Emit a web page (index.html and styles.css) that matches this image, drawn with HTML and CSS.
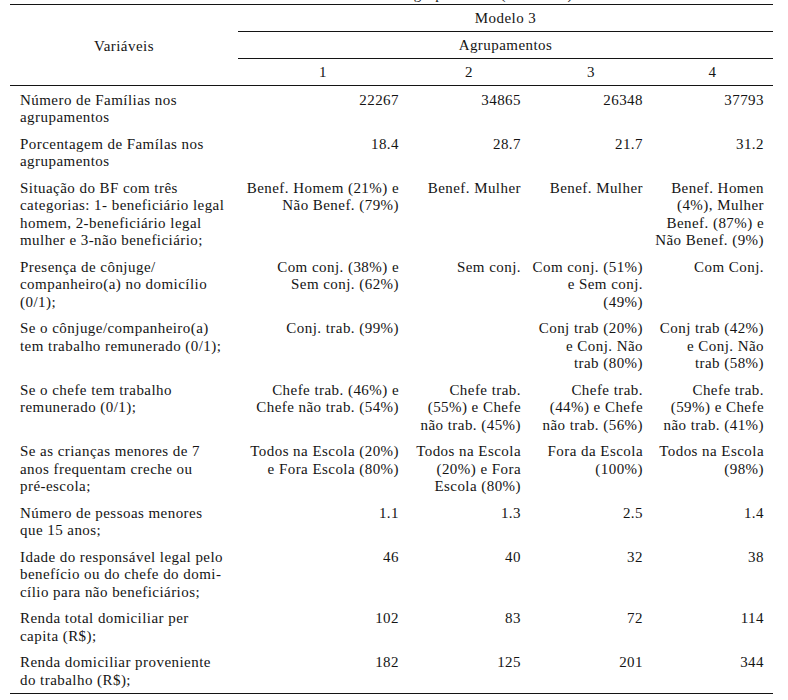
FILE: index.html
```html
<!DOCTYPE html>
<html lang="pt">
<head>
<meta charset="utf-8">
<title>Modelo 3 – Agrupamentos</title>
<link rel="stylesheet" href="styles.css">
</head>
<body>
<div class="page">
  <div class="caption">Tabela 5 – Características dos agrupamentos (Modelo 3)</div>
  <table class="tbl">
    <colgroup>
      <col class="c-var">
      <col class="c-1">
      <col class="c-2">
      <col class="c-3">
      <col class="c-4">
    </colgroup>
    <thead>
      <tr class="h1">
        <th class="var" rowspan="3">Variáveis</th>
        <th class="grp" colspan="4">Modelo 3</th>
      </tr>
      <tr class="h2">
        <th class="grp" colspan="4">Agrupamentos</th>
      </tr>
      <tr class="h3">
        <th class="num">1</th>
        <th class="num">2</th>
        <th class="num">3</th>
        <th class="num">4</th>
      </tr>
    </thead>
    <tbody>
      <tr>
        <td class="lab">Número de Famílias nos<br>agrupamentos</td>
        <td>22267</td><td>34865</td><td>26348</td><td>37793</td>
      </tr>
      <tr>
        <td class="lab">Porcentagem de Famílas nos<br>agrupamentos</td>
        <td>18.4</td><td>28.7</td><td>21.7</td><td>31.2</td>
      </tr>
      <tr>
        <td class="lab">Situação do BF com três<br>categorias: 1- beneficiário legal<br>homem, 2-beneficiário legal<br>mulher e 3-não beneficiário;</td>
        <td>Benef. Homem (21%) e<br>Não Benef. (79%)</td>
        <td>Benef. Mulher</td>
        <td>Benef. Mulher</td>
        <td>Benef. Homen<br>(4%), Mulher<br>Benef. (87%) e<br>Não Benef. (9%)</td>
      </tr>
      <tr>
        <td class="lab">Presença de cônjuge/<br>companheiro(a) no domicílio<br>(0/1);</td>
        <td>Com conj. (38%) e<br>Sem conj. (62%)</td>
        <td>Sem conj.</td>
        <td>Com conj. (51%)<br>e Sem conj.<br>(49%)</td>
        <td>Com Conj.</td>
      </tr>
      <tr>
        <td class="lab">Se o cônjuge/companheiro(a)<br>tem trabalho remunerado (0/1);</td>
        <td>Conj. trab. (99%)</td>
        <td></td>
        <td>Conj trab (20%)<br>e Conj. Não<br>trab (80%)</td>
        <td>Conj trab (42%)<br>e Conj. Não<br>trab (58%)</td>
      </tr>
      <tr>
        <td class="lab">Se o chefe tem trabalho<br>remunerado (0/1);</td>
        <td>Chefe trab. (46%) e<br>Chefe não trab. (54%)</td>
        <td>Chefe trab.<br>(55%) e Chefe<br>não trab. (45%)</td>
        <td>Chefe trab.<br>(44%) e Chefe<br>não trab. (56%)</td>
        <td>Chefe trab.<br>(59%) e Chefe<br>não trab. (41%)</td>
      </tr>
      <tr>
        <td class="lab">Se as crianças menores de 7<br>anos frequentam creche ou<br>pré-escola;</td>
        <td>Todos na Escola (20%)<br>e Fora Escola (80%)</td>
        <td>Todos na Escola<br>(20%) e Fora<br>Escola (80%)</td>
        <td>Fora da Escola<br>(100%)</td>
        <td>Todos na Escola<br>(98%)</td>
      </tr>
      <tr>
        <td class="lab">Número de pessoas menores<br>que 15 anos;</td>
        <td>1.1</td><td>1.3</td><td>2.5</td><td>1.4</td>
      </tr>
      <tr>
        <td class="lab">Idade do responsável legal pelo<br>benefício ou do chefe do domi-<br>cílio para não beneficiários;</td>
        <td>46</td><td>40</td><td>32</td><td>38</td>
      </tr>
      <tr>
        <td class="lab">Renda total domiciliar per<br>capita (R$);</td>
        <td>102</td><td>83</td><td>72</td><td>114</td>
      </tr>
      <tr class="last">
        <td class="lab">Renda domiciliar proveniente<br>do trabalho (R$);</td>
        <td>182</td><td>125</td><td>201</td><td>344</td>
      </tr>
    </tbody>
  </table>
</div>
</body>
</html>
```
FILE: styles.css
```css
html, body {
  margin: 0;
  padding: 0;
  background: #ffffff;
}

body {
  font-family: "Liberation Serif", "Times New Roman", serif;
  font-size: 15px;
  letter-spacing: 0.45px;
  color: #141414;
  overflow: hidden;
}

.page {
  padding: 0 0 0 10px;
}

.caption {
  margin-top: -15px;
  height: 19px;
  line-height: 18px;
  text-align: center;
  width: 763px;
  white-space: nowrap;
}

.tbl {
  border-collapse: collapse;
  width: 763px;
  table-layout: fixed;
}

.c-var { width: 228px; }
.c-1 { width: 170px; }
.c-2 { width: 122px; }
.c-3 { width: 122px; }
.c-4 { width: 121px; }

.tbl th {
  font-weight: normal;
  line-height: 17.5px;
  padding: 4.5px 0 4px;
  text-align: center;
}

.tbl .h1 th {
  border-top: 1px solid #141414;
}

.tbl .h1 .grp,
.tbl .h2 .grp {
  border-bottom: 1px solid #141414;
}

.tbl th.var {
  padding-top: 7px;
  border-bottom: 1px solid #141414;
}

.tbl .h3 th {
  border-bottom: 1px solid #141414;
}

.tbl td {
  vertical-align: top;
  line-height: 17.5px;
  padding: 5.5px 9px 3.5px 0;
  text-align: right;
  white-space: nowrap;
}

.tbl td.lab {
  text-align: left;
  padding-left: 10px;
  padding-right: 0;
}

.tbl tr.last td {
  border-bottom: 1px solid #141414;
}
```
